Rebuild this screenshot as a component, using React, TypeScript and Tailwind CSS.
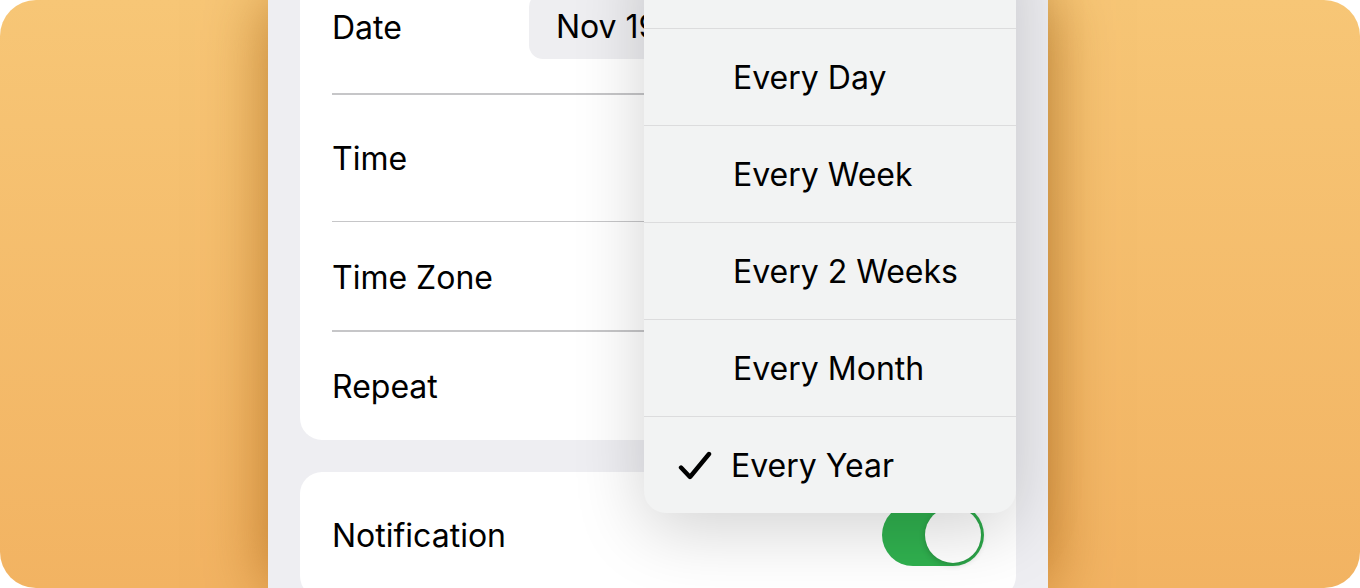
import React from "react";

const rows = [
  { label: "Time", h: "h-[126px]" },
  { label: "Time Zone", h: "h-[108px]" },
  { label: "Repeat", h: "h-[108px]" },
];

const options = ["Never", "Every Day", "Every Week", "Every 2 Weeks", "Every Month", "Every Year"];

const Check = () => (
  <svg width="34" height="30" viewBox="0 0 34 30" fill="none">
    <path
      d="M3 16.5 L12 26 L31 3"
      stroke="#000"
      strokeWidth="4.4"
      strokeLinecap="round"
      strokeLinejoin="round"
    />
  </svg>
);

export default function App() {
  return (
    <div className="w-[1360px] h-[588px] bg-white font-['Inter',sans-serif]">
      <div className="w-full h-full rounded-[36px] overflow-hidden bg-gradient-to-b from-[#f7c676] to-[#f2b362] flex">
        {/* settings sheet */}
        <div className="relative ml-[268px] w-[780px] h-full bg-[#eeeef2] px-8 shadow-[0_0_60px_rgba(150,80,0,0.6)]">
          <div className="-mt-[40px] bg-white rounded-[22px]">
            <div className="h-[133px] flex items-center px-8">
              <span className="mt-[2px] text-[32px] text-black">Date</span>
              <div className="ml-[127px] h-[66px] mt-[-2px] flex items-center px-[27px] rounded-[14px] bg-[#eeeef1] text-[32px] text-black whitespace-nowrap">
                <span className="mt-[2px]">Nov 19, 2024</span>
              </div>
            </div>
            {rows.map((r) => (
              <div key={r.label}>
                <div className="ml-8 h-[1.5px] bg-[#c6c6c8]" />
                <div className={`${r.h} flex items-center px-8`}>
                  <span className="mt-[3px] text-[32px] text-black">{r.label}</span>
                </div>
              </div>
            ))}
          </div>

          <div className="mt-8 bg-white rounded-[22px]">
            <div className="h-[126px] flex items-center justify-between px-8">
              <span className="mt-[3px] text-[32px] text-black">Notification</span>
              <div className="w-[102px] h-[62px] rounded-full bg-[#30b14f] flex items-center justify-end pr-[3px]">
                <div className="w-[56px] h-[56px] rounded-full bg-white shadow-[0_2px_6px_rgba(0,0,0,0.2)]" />
              </div>
            </div>
          </div>

          {/* repeat menu */}
          <div className="absolute left-[376px] bottom-[75px] w-[372px] rounded-b-[22px] bg-[#f2f3f3] shadow-[0_16px_70px_rgba(0,0,0,0.18)]">
            {options.map((o, i) => (
              <div
                key={o}
                className={`h-[97px] flex items-center ${i > 0 ? "border-t border-[#dcdcdd]" : ""} ${
                  o === "Every Year" ? "pl-[34px]" : "pl-[89px]"
                }`}
              >
                {o === "Every Year" && (
                  <span className="mr-[19px] mt-[2px]">
                    <Check />
                  </span>
                )}
                <span className="mt-[2px] text-[32px] text-black">{o}</span>
              </div>
            ))}
          </div>
        </div>
      </div>
    </div>
  );
}
